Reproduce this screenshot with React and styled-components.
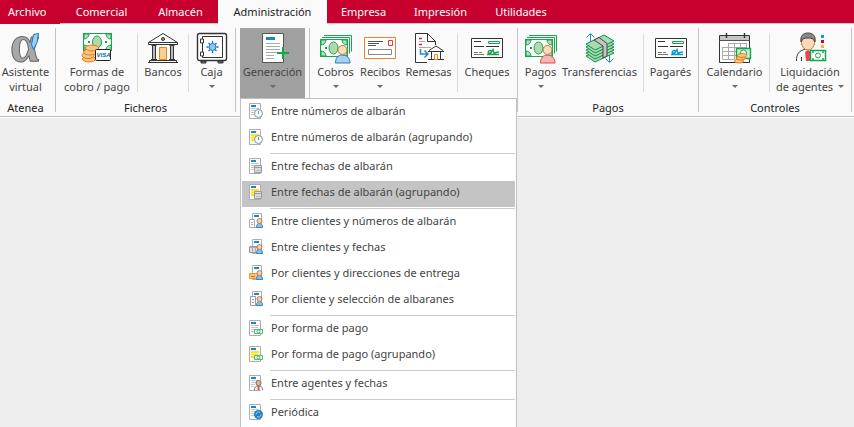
import React, { useState } from "react"
import styled, { createGlobalStyle, css } from "styled-components"

const GlobalStyle = createGlobalStyle`
    * {
        box-sizing: border-box;
    }
    body {
        margin: 0;
        background: #eeeeee;
        font-family: "Noto Sans", "Open Sans", sans-serif;
        font-size: 11px;
        color: #444444;
    }
    button {
        font: inherit;
        color: inherit;
        border: 0;
        margin: 0;
        padding: 0;
        background: none;
        cursor: pointer;
    }
`

const Page = styled.div`
    min-height: 100vh;
    max-height: 100vh;
    overflow: hidden;
`

const TabBar = styled.nav`
    display: flex;
    height: 24px;
    background: #c8002d;
    box-shadow: inset 0 -1px 0 #d5c3c6;
`

const Tab = styled.button`
    width: ${(p) => p.$width}px;
    height: 24px;
    padding-bottom: 2px;
    color: #ffffff;
    white-space: nowrap;
    ${(p) =>
        p.$file &&
        css`
            padding-left: 8px;
            text-align: left;
            background: #c8002d;
        `}
    ${(p) =>
        p.$active &&
        css`
            color: #222222;
            background: #fafafa;
        `}
`

const RibbonBar = styled.div`
    display: flex;
    height: 94px;
    padding-top: 4px;
    background: #fafafa;
    border-bottom: 1px solid #ffffff;
    box-shadow: inset 0 -1px 0 #c4c4c4;
`

const Group = styled.section`
    display: flex;
    flex-direction: column;
    height: 84px;
    padding: 0 4px;
    border-right: 1px solid #c4c4c4;
    &:first-child {
        padding-left: 0;
    }
`

const GroupTools = styled.div`
    display: flex;
    height: 70px;
`

const GroupTitle = styled.div`
    height: 14px;
    line-height: 20px;
    text-align: center;
    color: #222222;
`

const Divider = styled.span`
    width: 1px;
    height: 58px;
    margin: 6px 3px 0;
    background: #dddddd;
`

const ToolSlot = styled.div`
    position: relative;
`

const Tool = styled.button`
    display: flex;
    flex-direction: column;
    align-items: center;
    width: ${(p) => p.$width}px;
    height: 70px;
    padding-top: 4px;
    white-space: nowrap;
    background: ${(p) => (p.$open ? "#a0a0a0" : "transparent")};
    > svg {
        flex: none;
        overflow: visible;
    }
`

const ToolLabel = styled.span`
    display: flex;
    align-items: center;
    justify-content: center;
    gap: 5px;
    height: 15px;
    line-height: 15px;
`

const Caret = styled.i`
    border: 3px solid transparent;
    border-top-color: #6a6a6a;
    border-bottom: 0;
`

const Menu = styled.div`
    position: absolute;
    z-index: 2;
    top: 100%;
    left: 0;
    width: 277px;
    padding: 1px;
    background: #ffffff;
    border: 1px solid #c0c0c0;
`

const MenuItem = styled.button`
    display: flex;
    align-items: center;
    gap: 8px;
    width: 100%;
    height: 26px;
    padding: 0 0 5px 7px;
    text-align: left;
    white-space: nowrap;
    background: ${(p) => (p.$selected ? "#c4c4c4" : "transparent")};
    svg {
        flex: none;
    }
`

const MenuRule = styled.hr`
    height: 1px;
    margin: 1px 0 1px 28px;
    border: 0;
    background: #cccccc;
`

const Icon = ({ width = 32, children }) => (
    <svg width={width} height="32" viewBox={`0 0 ${width} 32`} fill="none" aria-hidden="true">
        {children}
    </svg>
)

const AssistantIcon = () => (
    <Icon>
        <text
            x="0"
            y="29"
            fontSize="52"
            fontWeight="bold"
            fontFamily="Liberation Serif, serif"
            fill="#a8a8a8"
            stroke="#666"
        >
            α
        </text>
        <path d="M23.500 2.500l5-1-1.500 9-3.500 7-2-5z" fill="#9fd0f4" stroke="#1976c0" />
    </Icon>
)

const Bill = ({ x, y, w = 28, h = 17 }) => (
    <g transform={`translate(${x} ${y})`}>
        <rect x=".5" y=".5" width={w} height={h} fill="#fff" stroke="#13a84b" />
        <path
            d={`M1 1h5a5 5 0 0 1-5 5zM${w} 1v5a5 5 0 0 1-5-5zM1 ${h}v-5a5 5 0 0 1 5 5zM${w} ${h}h-5a5 5 0 0 1 5-5z`}
            fill="#b4e0b9"
            stroke="#13a84b"
        />
        <ellipse cx={w / 2} cy={h / 2 + 0.5} rx="4.5" ry="6" fill="#b0d9ad" stroke="#13a84b" />
        <path d={`M5 ${h / 2 + 0.5}h2M${w - 6} ${h / 2 + 0.5}h2`} stroke="#13a84b" strokeWidth="2" />
    </g>
)

const PaymentIcon = () => (
    <Icon>
        <Bill x={2} y={1} />
        <g fill="#fbc783" stroke="#e77817">
            <ellipse cx="8" cy="27" rx="6.5" ry="3" />
            <ellipse cx="7" cy="23.5" rx="6" ry="3" />
            <ellipse cx="9" cy="20" rx="6.5" ry="3" />
            <ellipse cx="11" cy="16" rx="6.5" ry="3" />
        </g>
        <rect x="14.5" y="17.5" width="15" height="11" rx="1" fill="#fff" stroke="#222" />
        <text
            x="15.5"
            y="25"
            fontSize="6"
            fontWeight="bold"
            fontStyle="italic"
            fontFamily="Liberation Sans, sans-serif"
            fill="#0867b1"
        >
            VISA
        </text>
    </Icon>
)

const BankIcon = () => (
    <Icon>
        <path d="M1.5 10.5L16 1.5l14.500 9v2h-29z" fill="#fff" stroke="#333" />
        <path d="M2 10.500h28" stroke="#333" />
        <circle cx="16" cy="7" r="1.500" fill="#999" stroke="#333" />
        <path d="M5.500 13.500h3v14h-3zM23.500 13.500h3v14h-3z" fill="#bbb" stroke="#333" />
        <path d="M4 13h6M22 13h6M4 27.500h6M22 27.500h6M1 30.500h30M2.500 28.500h27v2h-27z" stroke="#333" />
        <path d="M12.500 15.500h7v12h-7z" fill="#fccf8e" stroke="#e98425" />
    </Icon>
)

const SafeIcon = () => (
    <Icon>
        <path d="M5 29h5v2H5zM22 29h5v2h-5z" fill="#777" stroke="#333" />
        <rect x="1.500" y="1.500" width="29" height="27" rx="2" fill="#fff" stroke="#333" strokeWidth="1.400" />
        <path d="M6.500 4.500h20v21h-20z" stroke="#333" />
        <path d="M4.500 7h3v4h-3zM4.500 20h3v4h-3z" fill="#fff" stroke="#333" />
        <circle cx="16.500" cy="15" r="3.500" fill="#8bc8ec" stroke="#1774bd" />
        <path
            d="M16.500 9v2M16.500 19v2M10.500 15h2M20.500 15h2M12.500 11l1.200 1.200M19.300 17.800l1.200 1.200M20.500 11l-1.200 1.200M13.700 17.800L12.500 19"
            stroke="#1774bd"
            strokeWidth="1.400"
        />
    </Icon>
)

const GenerateIcon = () => (
    <Icon>
        <path d="M5.500 1.500h21v29h-21z" fill="#fff" stroke="#555" />
        <path d="M9 5h9v3H9z" fill="#1c84c9" />
        <path d="M9 11.500h14M9 14.500h14M9 17.500h14M9 20.500h11M9 23.500h8M9 26.500h8" stroke="#aaa" />
        <path d="M26 15v12M20 21h12" stroke="#0caa49" strokeWidth="2" />
    </Icon>
)

const Person = ({ body, edge }) => (
    <>
        <path d="M15.500 31c0-5 2.500-8 7-8s7.500 3 7.500 8z" fill={body} stroke={edge} />
        <circle cx="22.500" cy="18" r="4.500" fill="#fcddb9" stroke="#b17b48" />
    </>
)

const CashPersonIcon = ({ body, edge }) => (
    <Icon>
        <path d="M4 3.500h27.500v16M2 5.500h27.500v16" stroke="#13a84b" />
        <Bill x={0} y={7} w={27} />
        <Person body={body} edge={edge} />
    </Icon>
)

const ReceiptIcon = () => (
    <Icon>
        <path d="M.5 5.500h31v21H.500z" fill="#fff" stroke="#ed8128" />
        <path d="M4 9.500h15M4 11.500h11M4 13.500h8" stroke="#555" />
        <path d="M24.500 8.500h4v5h-4z" stroke="#e63946" />
        <path d="M4.500 17.500h23v5h-23z" stroke="#888" />
    </Icon>
)

const RemittanceIcon = () => (
    <Icon>
        <path d="M14 30.500H2.500v-29h12l8 8V13" fill="#fff" stroke="#333" />
        <path d="M14.500 1.500v8h8z" fill="#fff" stroke="#333" />
        <path d="M6 6.500h3M6 12.500h3" stroke="#e3163a" strokeWidth="1.500" />
        <path d="M6 9.500h6M6 15.500h12" stroke="#aaa" />
        <path d="M7.500 17v5h7M11.500 18.500l3.500 3.500-3.500 3.500" stroke="#2686c8" strokeWidth="1.500" />
        <path d="M16 18.500l7-4.500 7 4.500M15 19.500h16M15 27.500h16M18.500 20v7M27.500 20v7" stroke="#333" />
        <path d="M21.500 22.500h3v5h-3z" fill="#fff" stroke="#ed8128" />
    </Icon>
)

const ChequeIcon = ({ ink }) => (
    <Icon>
        <path d="M.5 6.500h31v19H.500z" fill="#fff" stroke="#333" />
        <path d="M3 9.500h7M3 14.500h10M15 14.500h13" stroke="#333" />
        <path d="M17.500 9.500h11v2h-11z" stroke="#13a84b" />
        <path d="M3 20.500h4M8 20.500h3M3 22.500h10" stroke="#777" />
        <path
            d="M16 22.500c4 0 6-5 3-4s-2 3 0 2.500M19 22.500l3-5 1 4 2-1 3-.5M17 22.500h11"
            stroke={ink}
            strokeWidth="1.400"
        />
    </Icon>
)

const TransferIcon = () => (
    <Icon>
        <path d="M6.500 12V2M2.500 5.500l4-4 4 4M25.500 19v11M21.500 26.500l4 4 4-4" stroke="#2686c8" />
        {[12, 9, 6, 3, 0].map((y) => (
            <path key={y} d={`M2 ${12 + y}l18-9 10 6-19 9z`} fill="#a8dcb0" stroke="#128d48" />
        ))}
        <path d="M10 8l5-2.500 8 6v12.500l-4 2V14z" fill="#c5c5c5" stroke="#444" />
    </Icon>
)

const CalendarIcon = () => (
    <Icon>
        <path d="M.5 3.500h30v27H.500z" fill="#fff" stroke="#333" />
        <path d="M1 4h29v4H1z" fill="#c5c5c5" />
        <path d="M.5 8.500h30" stroke="#555" />
        <path d="M7.500 1v5M25.500 1v5" stroke="#333" strokeWidth="1.400" />
        <path
            d="M9.500 11.500h18v4M3.500 15.500h24M3.500 19.500h20M3.500 23.500h14M3.500 27.500h12M3.500 15v12M9.500 11v16M15.500 11v16M21.500 11v9M27.500 11v8"
            stroke="#aaa"
        />
        <path d="M17.500 16.500h14v10h-14z" fill="#c9edcc" stroke="#13a84b" strokeWidth="1.400" />
        <circle cx="24.500" cy="21" r="3" fill="#fff" stroke="#13a84b" />
        <g fill="#fbc783" stroke="#e77817">
            <ellipse cx="20" cy="29" rx="4.500" ry="2" />
            <ellipse cx="22" cy="26" rx="4.500" ry="2" />
            <ellipse cx="23" cy="23.500" rx="4.500" ry="2" />
        </g>
    </Icon>
)

const AgentIcon = () => (
    <Icon>
        <path d="M2.500 29c0-7 2-10 9-11h4c4 1 7 2 7 6v5" fill="#fff" />
        <path d="M2.500 29c0-7 2-10 9-12M7.500 29v-4" stroke="#333" />
        <path d="M11 20l3-2 3 2-1 9h-4z" fill="#e9474c" />
        <ellipse cx="14" cy="10.500" rx="6.500" ry="7.500" fill="#fcd8b4" stroke="#b17b48" />
        <path d="M7 10c-1-6 2-9 7-9s8 3 7 9c-1-3-3-4-7-4s-6 1-7 4z" fill="#888" stroke="#444" />
        <path d="M27 3h3v3h-3z" fill="#009fe3" />
        <path d="M27 8h3v3h-3z" fill="#e2001a" />
        <path d="M27 13h3v3h-3z" fill="#f9b233" />
        <path d="M16.500 18.500h15v10h-15z" fill="#fff" stroke="#13a84b" strokeWidth="1.500" />
        <circle cx="24" cy="23.500" r="2.500" stroke="#13a84b" />
        <path d="M18 20h2M28 20h2M18 27h2M28 27h2" stroke="#13a84b" strokeWidth="1.500" />
    </Icon>
)

const badges = {
    clock: (
        <>
            <circle cx="9.500" cy="10.500" r="4" fill="#f6f9fb" stroke="#8b9399" />
            <path d="M9.500 8v3" stroke="#4a9bd0" />
        </>
    ),
    calendar: (
        <>
            <path d="M5.500 7.500h7v7h-7z" fill="#ddd" stroke="#999" />
            <path d="M6 9.500h6" stroke="#999" />
            <path d="M7 12.500h5" stroke="#bbb" />
        </>
    ),
    cash: (
        <>
            <path d="M5.500 9.500h8v4h-8z" fill="#e9f8eb" stroke="#4dba75" />
            <circle cx="9.500" cy="11.500" r="1.500" stroke="#4dba75" />
        </>
    ),
    agent: (
        <>
            <path d="M5.500 15c0-3 1-4 4-4s4 1 4 4" fill="#fff" stroke="#777" />
            <path d="M9.500 11v4" stroke="#e9474c" strokeWidth="2" />
            <circle cx="9.500" cy="8" r="2.500" fill="#e9b698" stroke="#77706c" />
        </>
    ),
    sync: (
        <>
            <circle cx="9.500" cy="10.500" r="4.500" fill="#1f7fc4" />
            <path d="M7 10.500a2.500 2.500 0 0 1 4-2M12 10.500a2.500 2.500 0 0 1-4 2" stroke="#a9d9f7" />
        </>
    ),
}

const clientParts = {
    page: <path d="M.5 6.500h5v8h-5zM2 9.500h2M2 11.500h2" fill="#fff" stroke="#aaa" />,
    calendar: (
        <>
            <path d="M.5 7.500h8v6h-8z" fill="#ddd" stroke="#999" />
            <path d="M0 8.500h9M3.500 8v5M6.500 8v5" stroke="#aaa" />
        </>
    ),
    address: (
        <>
            <path d="M.5 8.500h8v5h-8z" fill="#fbc66b" stroke="#e8973a" />
            <path d="M2 11.500h4" stroke="#d86b1f" />
        </>
    ),
    delivery: <path d="M1.500 5.500h5v9h-5zM3 8.500h2M3 11.500h2" fill="#fff" stroke="#999" />,
}

const DocIcon = ({ badge, client, yellow }) => (
    <svg width="14" height="16" viewBox="0 0 14 16" fill="none" aria-hidden="true">
        <path d={client ? "M3.500.500h9v14h-9z" : "M.5.500h11v15H.500z"} fill="#fff" stroke="#aaaeb1" />
        <path d={client ? "M5 3h5" : "M2 3h5"} stroke="#1c84c9" strokeWidth="2" />
        {!client && (
            <path
                d={yellow ? "M2 6h8M2 8.500h7M2 11h4" : "M2 5.500h8M2 7.500h7M2 9.500h4M2 11.500h3"}
                stroke={yellow ? "#ffe11c" : "#c2c6c9"}
                strokeWidth={yellow ? 2 : 1}
            />
        )}
        {client ? (
            <>
                {clientParts[client]}
                <path d="M7.500 14.500c0-3 1-4 3-4s3 1 3 4z" fill="#86c1eb" stroke="#3b84bd" />
                <circle cx="10.500" cy="8" r="2.500" fill="#f8d0a9" stroke="#b98055" />
            </>
        ) : (
            badges[badge]
        )}
    </svg>
)

const tabs = [
    { name: "Archivo", width: 60, file: true },
    { name: "Comercial", width: 83 },
    { name: "Almacén", width: 75 },
    { name: "Administración", width: 109 },
    { name: "Empresa", width: 73 },
    { name: "Impresión", width: 81 },
    { name: "Utilidades", width: 80 },
]

const menuSections = [
    [
        { text: "Entre números de albarán", badge: "clock" },
        { text: "Entre números de albarán (agrupando)", badge: "clock", yellow: true },
    ],
    [
        { text: "Entre fechas de albarán", badge: "calendar" },
        { text: "Entre fechas de albarán (agrupando)", badge: "calendar", yellow: true },
    ],
    [
        { text: "Entre clientes y números de albarán", client: "page" },
        { text: "Entre clientes y fechas", client: "calendar" },
        { text: "Por clientes y direcciones de entrega", client: "address" },
        { text: "Por cliente y selección de albaranes", client: "delivery" },
    ],
    [
        { text: "Por forma de pago", badge: "cash" },
        { text: "Por forma de pago (agrupando)", badge: "cash", yellow: true },
    ],
    [{ text: "Entre agentes y fechas", badge: "agent" }],
    [{ text: "Periódica", badge: "sync" }],
]

const GenerateMenu = () => {
    const [selected, setSelected] = useState("Entre fechas de albarán (agrupando)")

    return (
        <Menu role="menu">
            {menuSections.map((items, i) => (
                <React.Fragment key={i}>
                    {i > 0 && <MenuRule />}
                    {items.map(({ text, ...icon }) => (
                        <MenuItem
                            key={text}
                            role="menuitem"
                            $selected={selected === text}
                            onMouseEnter={() => setSelected(text)}
                        >
                            <DocIcon {...icon} />
                            {text}
                        </MenuItem>
                    ))}
                </React.Fragment>
            ))}
        </Menu>
    )
}

const RibbonTool = ({ icon, label, second, width, caret, open, onClick }) => (
    <Tool $width={width} $open={open} onClick={onClick}>
        {icon}
        <ToolLabel>{label}</ToolLabel>
        {(second || caret) && (
            <ToolLabel>
                {second}
                {caret && <Caret />}
            </ToolLabel>
        )}
    </Tool>
)

export default function App() {
    const [activeTab, setActiveTab] = useState("Administración")
    const [menuOpen, setMenuOpen] = useState(true)

    return (
        <Page>
            <GlobalStyle />
            <TabBar>
                {tabs.map((tab) => (
                    <Tab
                        key={tab.name}
                        $width={tab.width}
                        $file={tab.file}
                        $active={tab.name === activeTab}
                        onClick={() => setActiveTab(tab.name)}
                    >
                        {tab.name}
                    </Tab>
                ))}
            </TabBar>
            <RibbonBar>
                <Group>
                    <GroupTools>
                        <RibbonTool icon={<AssistantIcon />} label="Asistente" second="virtual" width={51} />
                    </GroupTools>
                    <GroupTitle>Atenea</GroupTitle>
                </Group>
                <Group>
                    <GroupTools>
                        <RibbonTool icon={<PaymentIcon />} label="Formas de" second="cobro / pago" width={74} />
                        <Divider />
                        <RibbonTool icon={<BankIcon />} label="Bancos" width={44} />
                        <Divider />
                        <RibbonTool icon={<SafeIcon />} label="Caja" width={39} caret />
                    </GroupTools>
                    <GroupTitle>Ficheros</GroupTitle>
                </Group>
                <Group>
                    <ToolSlot>
                        <RibbonTool
                            icon={<GenerateIcon />}
                            label="Generación"
                            width={65}
                            caret
                            open={menuOpen}
                            onClick={() => setMenuOpen(!menuOpen)}
                        />
                        {menuOpen && <GenerateMenu />}
                    </ToolSlot>
                </Group>
                <Group>
                    <GroupTools>
                        <RibbonTool
                            icon={<CashPersonIcon body="#a9cfef" edge="#2b78b8" />}
                            label="Cobros"
                            width={43}
                            caret
                        />
                        <RibbonTool icon={<ReceiptIcon />} label="Recibos" width={46} caret />
                        <RibbonTool icon={<RemittanceIcon />} label="Remesas" width={51} />
                        <Divider />
                        <RibbonTool icon={<ChequeIcon ink="#13a84b" />} label="Cheques" width={52} />
                    </GroupTools>
                </Group>
                <Group>
                    <GroupTools>
                        <RibbonTool
                            icon={<CashPersonIcon body="#f5b5b4" edge="#e0474c" />}
                            label="Pagos"
                            width={37}
                            caret
                        />
                        <RibbonTool icon={<TransferIcon />} label="Transferencias" width={81} />
                        <Divider />
                        <RibbonTool icon={<ChequeIcon ink="#009fd6" />} label="Pagarés" width={47} />
                    </GroupTools>
                    <GroupTitle>Pagos</GroupTitle>
                </Group>
                <Group>
                    <GroupTools>
                        <RibbonTool icon={<CalendarIcon />} label="Calendario" width={63} caret />
                        <Divider />
                        <RibbonTool icon={<AgentIcon />} label="Liquidación" second="de agentes" width={74} caret />
                    </GroupTools>
                    <GroupTitle>Controles</GroupTitle>
                </Group>
            </RibbonBar>
        </Page>
    )
}
